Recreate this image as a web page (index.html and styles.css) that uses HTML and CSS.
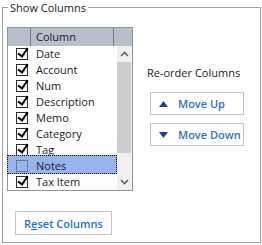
FILE: index.html
```html
<!DOCTYPE html>
<html lang="en">
<head>
    <meta charset="UTF-8">
    <title>Show Columns</title>
    <link rel="stylesheet" href="styles.css">
</head>
<body>
    <fieldset class="group">
        <legend>Show Columns</legend>
        <div class="cols">
            <div class="left">
                <div class="listbox">
                    <div class="list-head">
                        <span class="head-cell chk-cell"></span>
                        <span class="head-cell name-cell">Column</span>
                        <span class="head-cell rest-cell"></span>
                    </div>
                    <div class="list-body">
                        <ul class="rows">
                            <li class="row checked">Date</li>
                            <li class="row checked">Account</li>
                            <li class="row checked">Num</li>
                            <li class="row checked">Description</li>
                            <li class="row checked">Memo</li>
                            <li class="row checked">Category</li>
                            <li class="row checked">Tag</li>
                            <li class="row selected">Notes</li>
                            <li class="row checked">Tax Item</li>
                        </ul>
                        <div class="scrollbar">
                            <span class="arrow">
                                <svg width="9" height="6" viewBox="0 0 9 6"><polyline points="1,5 4.5,1.5 8,5" fill="none" stroke="#606060" stroke-width="1.6"/></svg>
                            </span>
                            <span class="thumb"></span>
                            <span class="track"></span>
                            <span class="arrow">
                                <svg width="9" height="6" viewBox="0 0 9 6"><polyline points="1,1 4.5,4.5 8,1" fill="none" stroke="#606060" stroke-width="1.6"/></svg>
                            </span>
                        </div>
                    </div>
                </div>
                <button class="btn reset-btn">R<u>e</u>set Columns</button>
            </div>
            <div class="right">
                <div class="reorder-label">Re-order Columns</div>
                <button class="btn move-btn">
                    <svg width="9" height="6" viewBox="0 0 9 6"><polygon points="0,6 4.5,0 9,6" fill="#1f3f99"/></svg>
                    Move Up
                </button>
                <button class="btn move-btn">
                    <svg width="9" height="6" viewBox="0 0 9 6"><polygon points="0,0 9,0 4.5,6" fill="#1f3f99"/></svg>
                    Move Down
                </button>
            </div>
        </div>
    </fieldset>
</body>
</html>
```

FILE: styles.css
```css
body {
    margin: 0;
    background: #ffffff;
    font-family: "Open Sans", "Noto Sans", sans-serif;
    font-size: 11px;
    color: #1a1a1a;
}
.group {
    box-sizing: border-box;
    width: 259px;
    height: 243px;
    margin: 0 0 0 2px;
    padding: 0;
    border: 1px solid #a0a0a0;
}
.group legend {
    margin-left: 5px;
    padding: 0 2px;
    line-height: 15px;
    color: #1a1a1a;
}
.cols {
    display: flex;
}
.left {
    padding-left: 4px;
    padding-top: 12px;
}
.listbox {
    width: 124px;
    border: 1px solid #8396ad;
}
.list-head {
    display: flex;
    height: 18px;
    background: #b6bfcc;
}
.head-cell {
    box-sizing: border-box;
    line-height: 18px;
}
.chk-cell {
    width: 23px;
    border-right: 1px solid #6e7b8c;
}
.name-cell {
    width: 83px;
    padding-left: 5px;
    border-right: 1px solid #6e7b8c;
}
.rest-cell {
    flex: 1;
}
.list-body {
    display: flex;
    height: 144px;
}
.rows {
    list-style: none;
    margin: 0;
    padding: 0;
    width: 109px;
}
.row {
    position: relative;
    box-sizing: border-box;
    height: 16px;
    line-height: 16px;
    padding-left: 28px;
}
.row::before {
    content: "";
    position: absolute;
    left: 8px;
    top: 2px;
    width: 10px;
    height: 10px;
    border: 1px solid #2b2b2b;
    background: #ffffff;
}
.row.checked::after {
    content: "";
    position: absolute;
    left: 12px;
    top: 0;
    width: 4px;
    height: 9px;
    border-right: 2px solid #000000;
    border-bottom: 2px solid #000000;
    transform: rotate(35deg);
}
.row.selected {
    height: 19px;
    margin-top: -3px;
    padding-top: 3px;
    margin-left: -1px;
    padding-left: 29px;
    width: 110px;
    background: #98b4ee;
    outline: 1px dotted #000000;
    outline-offset: -1px;
}
.row.selected::before {
    left: 9px;
    top: 5px;
    border-color: #6a7890;
    background: #98b4ee;
}
.scrollbar {
    display: flex;
    flex-direction: column;
    width: 15px;
    background: #f0f0f0;
}
.arrow {
    display: flex;
    align-items: center;
    justify-content: center;
    height: 16px;
}
.thumb {
    height: 91px;
    margin: 0 1px 0 0;
    background: #cdcdcd;
}
.track {
    flex: 1;
}
.btn {
    display: flex;
    align-items: center;
    box-sizing: border-box;
    background: #ffffff;
    border: 1px solid #c4c4c4;
    font-family: "Open Sans", "Noto Sans", sans-serif;
    font-size: 11px;
    font-weight: 600;
    white-space: nowrap;
    padding: 0;
    cursor: pointer;
}
.reset-btn {
    justify-content: center;
    width: 97px;
    height: 24px;
    margin: 20px 0 0 8px;
    color: #1f72c6;
}
.right {
    padding-left: 14px;
    padding-top: 50px;
}
.reorder-label {
    line-height: 16px;
    color: #1a1a1a;
}
.move-btn {
    width: 94px;
    height: 23px;
    margin: 11px 0 0 3px;
    padding-left: 8px;
    gap: 10px;
    color: #2f6fc7;
}
.move-btn + .move-btn {
    margin-top: 8px;
}
```
